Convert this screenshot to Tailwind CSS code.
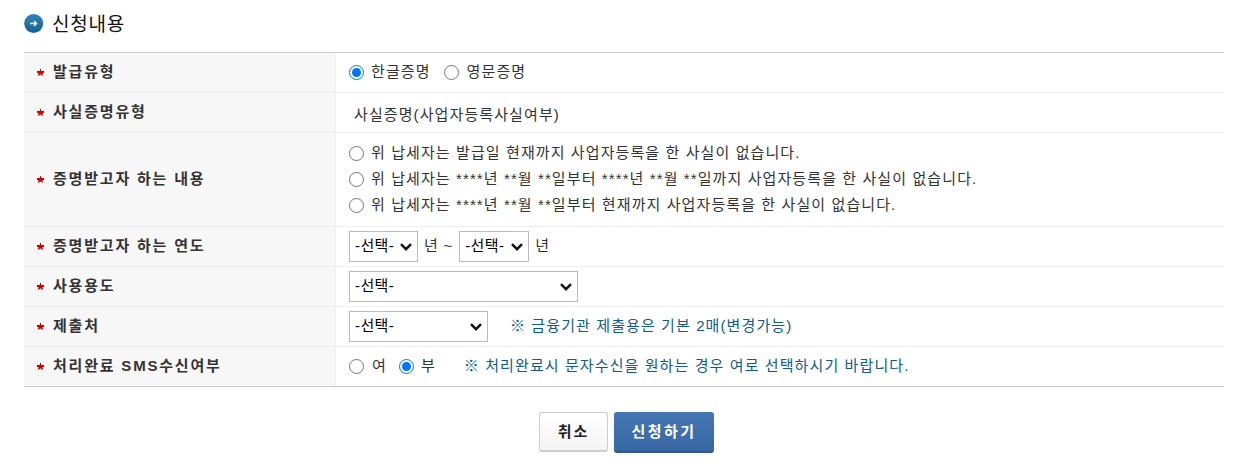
<!DOCTYPE html>
<html lang="ko">
<head>
  <meta charset="UTF-8">
  <title>신청내용</title>
  <script src="https://cdn.jsdelivr.net/npm/@tailwindcss/browser@4"></script>
</head>
<body class="bg-white h-[473px] overflow-hidden font-['Liberation_Sans','Noto_Sans_CJK_KR',sans-serif] text-[15px] tracking-[1.1px] text-[#333]">
  <div class="pl-6 pr-[17px]">
    <div class="h-[52px] flex items-start pt-[14px] gap-2">
      <svg width="20" height="19" viewBox="0 0 20 19"><defs><linearGradient id="g" x1="0" y1="0" x2="0" y2="1"><stop offset="0" stop-color="#2f84bd"/><stop offset="1" stop-color="#14608f"/></linearGradient></defs><circle cx="9.700" cy="9.500" r="9.500" fill="url(#g)"/><path d="M6 9.500h6.500M10 7l2.600 2.500L10 12" fill="none" stroke="#fff" stroke-width="1.400"/></svg>
      <h2 class="mt-[1px] text-[19px] leading-[20px] tracking-[0.8px] text-[#111]">신청내용</h2>
    </div>
    <div class="border-t border-b border-[#ccc] divide-y divide-[#eee]">
      <!-- 발급유형 -->
      <div class="flex h-10">
        <div class="w-[312px] bg-[#f7f7f7] border-r border-[#eee] pl-[13px] pb-[1px] flex items-center gap-[9px] font-bold tracking-[1.8px]"><svg width="7" height="7" viewBox="0 0 7 7"><path d="M3 0h1v2h3v2H5.500l.5 3-2.500-1.500L1 7l.5-3H0V2h3z" fill="#d40000"/></svg>발급유형</div>
        <div class="flex-1 pl-[13px] flex items-center gap-[13px]">
          <label class="flex items-center gap-[7px]"><input type="radio" name="a" checked class="w-[15px] h-[15px] m-0">한글증명</label>
          <label class="flex items-center gap-[8px]"><input type="radio" name="a" class="w-[15px] h-[15px] m-0">영문증명</label>
        </div>
      </div>
      <!-- 사실증명유형 -->
      <div class="flex h-10">
        <div class="w-[312px] bg-[#f7f7f7] border-r border-[#eee] pl-[13px] pb-[1px] flex items-center gap-[9px] font-bold tracking-[1.8px]"><svg width="7" height="7" viewBox="0 0 7 7"><path d="M3 0h1v2h3v2H5.500l.5 3-2.500-1.500L1 7l.5-3H0V2h3z" fill="#d40000"/></svg>사실증명유형</div>
        <div class="flex-1 pl-[18px] pt-[5px] flex items-center">사실증명(사업자등록사실여부)</div>
      </div>
      <!-- 증명받고자 하는 내용 -->
      <div class="flex h-[94px]">
        <div class="w-[312px] bg-[#f7f7f7] border-r border-[#eee] pl-[13px] pb-[1px] flex items-center gap-[9px] font-bold tracking-[1.8px]"><svg width="7" height="7" viewBox="0 0 7 7"><path d="M3 0h1v2h3v2H5.500l.5 3-2.500-1.500L1 7l.5-3H0V2h3z" fill="#d40000"/></svg>증명받고자 하는 내용</div>
        <div class="flex-1 pl-[13px] flex flex-col justify-center">
          <label class="h-[26px] flex items-center gap-[7px]"><input type="radio" name="b" class="w-[15px] h-[15px] m-0">위 납세자는 발급일 현재까지 사업자등록을 한 사실이 없습니다.</label>
          <label class="h-[26px] flex items-center gap-[7px]"><input type="radio" name="b" class="w-[15px] h-[15px] m-0">위 납세자는 ****년 **월 **일부터 ****년 **월 **일까지 사업자등록을 한 사실이 없습니다.</label>
          <label class="h-[26px] flex items-center gap-[7px]"><input type="radio" name="b" class="w-[15px] h-[15px] m-0">위 납세자는 ****년 **월 **일부터 현재까지 사업자등록을 한 사실이 없습니다.</label>
        </div>
      </div>
      <!-- 증명받고자 하는 연도 -->
      <div class="flex h-10">
        <div class="w-[312px] bg-[#f7f7f7] border-r border-[#eee] pl-[13px] pb-[1px] flex items-center gap-[9px] font-bold tracking-[1.8px]"><svg width="7" height="7" viewBox="0 0 7 7"><path d="M3 0h1v2h3v2H5.500l.5 3-2.500-1.500L1 7l.5-3H0V2h3z" fill="#d40000"/></svg>증명받고자 하는 연도</div>
        <div class="flex-1 pl-[13px] flex items-center gap-[6px]">
          <div class="relative w-[69px] h-[31px]">
            <select class="appearance-none w-full h-full pl-[5px] border border-[#bbb] text-black bg-white tracking-[0.4px]"><option>-선택-</option></select>
            <svg class="absolute right-[6px] top-[12px] pointer-events-none" width="12" height="8" viewBox="0 0 12 8"><path d="M1 1.200l5 5 5-5" fill="none" stroke="#111" stroke-width="2.400"/></svg>
          </div>
          <span class="tracking-[0.8px]">년 ~</span>
          <div class="relative w-[70px] h-[31px]">
            <select class="appearance-none w-full h-full pl-[5px] border border-[#bbb] text-black bg-white tracking-[0.4px]"><option>-선택-</option></select>
            <svg class="absolute right-[6px] top-[12px] pointer-events-none" width="12" height="8" viewBox="0 0 12 8"><path d="M1 1.200l5 5 5-5" fill="none" stroke="#111" stroke-width="2.400"/></svg>
          </div>
          <span>년</span>
        </div>
      </div>
      <!-- 사용용도 -->
      <div class="flex h-10">
        <div class="w-[312px] bg-[#f7f7f7] border-r border-[#eee] pl-[13px] pb-[1px] flex items-center gap-[9px] font-bold tracking-[1.8px]"><svg width="7" height="7" viewBox="0 0 7 7"><path d="M3 0h1v2h3v2H5.500l.5 3-2.500-1.500L1 7l.5-3H0V2h3z" fill="#d40000"/></svg>사용용도</div>
        <div class="flex-1 pl-[13px] flex items-center">
          <div class="relative w-[229px] h-[31px]">
            <select class="appearance-none w-full h-full pl-[5px] border border-[#bbb] text-black bg-white tracking-[0.4px]"><option>-선택-</option></select>
            <svg class="absolute right-[6px] top-[12px] pointer-events-none" width="12" height="8" viewBox="0 0 12 8"><path d="M1 1.200l5 5 5-5" fill="none" stroke="#111" stroke-width="2.400"/></svg>
          </div>
        </div>
      </div>
      <!-- 제출처 -->
      <div class="flex h-10">
        <div class="w-[312px] bg-[#f7f7f7] border-r border-[#eee] pl-[13px] pb-[1px] flex items-center gap-[9px] font-bold tracking-[1.8px]"><svg width="7" height="7" viewBox="0 0 7 7"><path d="M3 0h1v2h3v2H5.500l.5 3-2.500-1.500L1 7l.5-3H0V2h3z" fill="#d40000"/></svg>제출처</div>
        <div class="flex-1 pl-[13px] flex items-center gap-[22px]">
          <div class="relative w-[139px] h-[31px]">
            <select class="appearance-none w-full h-full pl-[5px] border border-[#bbb] text-black bg-white tracking-[0.4px]"><option>-선택-</option></select>
            <svg class="absolute right-[6px] top-[12px] pointer-events-none" width="12" height="8" viewBox="0 0 12 8"><path d="M1 1.200l5 5 5-5" fill="none" stroke="#111" stroke-width="2.400"/></svg>
          </div>
          <span class="text-[#0b5c8f]">※ 금융기관 제출용은 기본 2매(변경가능)</span>
        </div>
      </div>
      <!-- 처리완료 SMS수신여부 -->
      <div class="flex h-[39px]">
        <div class="w-[312px] bg-[#f7f7f7] border-r border-[#eee] pl-[13px] pb-[1px] flex items-center gap-[9px] font-bold tracking-[1.8px]"><svg width="7" height="7" viewBox="0 0 7 7"><path d="M3 0h1v2h3v2H5.500l.5 3-2.500-1.500L1 7l.5-3H0V2h3z" fill="#d40000"/></svg>처리완료 SMS수신여부</div>
        <div class="flex-1 pl-[13px] flex items-center">
          <label class="flex items-center gap-2"><input type="radio" name="c" class="w-[15px] h-[15px] m-0">여</label>
          <label class="ml-[12px] flex items-center gap-[7px]"><input type="radio" name="c" checked class="w-[15px] h-[15px] m-0">부</label>
          <span class="ml-[28px] text-[#0b5c8f]">※ 처리완료시 문자수신을 원하는 경우 여로 선택하시기 바랍니다.</span>
        </div>
      </div>
    </div>
    <div class="flex justify-center gap-[6px] mt-[25px] pl-[5px]">
      <button class="w-[69px] h-[40px] pt-[1px] border border-[#ccc] border-b-2 rounded-[3px] bg-gradient-to-b from-white to-[#f4f4f4] text-[#222] font-bold tracking-[2px]">취소</button>
      <button class="w-[100px] h-[41px] pt-[2px] border-b-2 border-[#2f5a8f] rounded-[3px] bg-gradient-to-b from-[#4577b5] to-[#3868a4] text-white font-bold tracking-[2.500px]">신청하기</button>
    </div>
  </div>
</body>
</html>
